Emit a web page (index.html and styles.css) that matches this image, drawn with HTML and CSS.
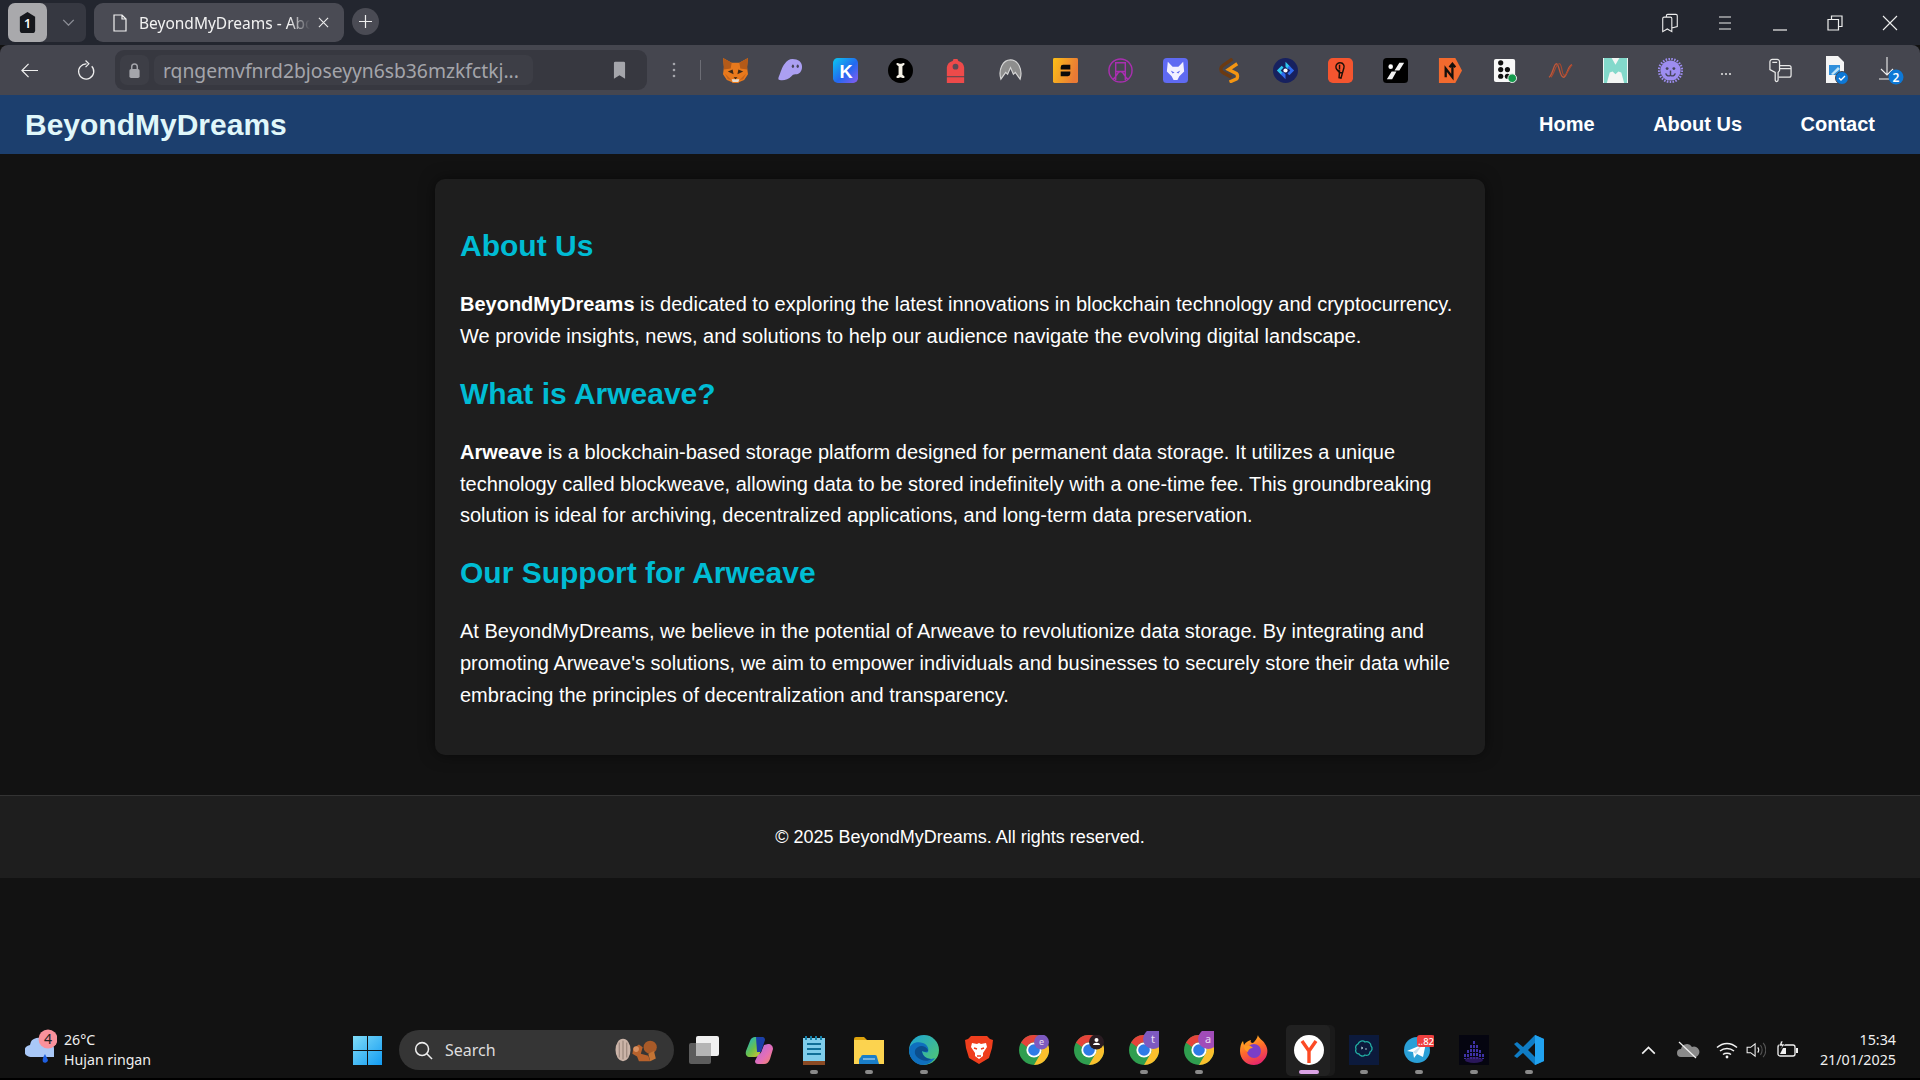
FILE: index.html
```html
<!DOCTYPE html>
<html lang="en">
<head>
<meta charset="utf-8">
<title>BeyondMyDreams - About Us</title>
<link rel="stylesheet" href="styles.css">
</head>
<body>
<svg class="defs" width="0" height="0" aria-hidden="true">
  <symbol id="chrome" viewBox="0 0 30 30">
    <circle cx="15" cy="15" r="15" fill="#2f9e4f"/>
    <path d="M2 7.5A15 15 0 0 1 28 7.5H15a7.5 7.5 0 0 0-7 4.5z" fill="#e5443a"/>
    <path d="M28 7.5A15 15 0 0 1 15 30l6.5-11.2a7.5 7.5 0 0 0 0-7.5z" fill="#fbc02d"/>
    <circle cx="15" cy="15" r="7.6" fill="#fff"/>
    <circle cx="15" cy="15" r="5.8" fill="#2f7be6"/>
  </symbol>
</svg>

<header class="tabstrip">
  <div class="tabcount">
    <div class="tabcount-square">
      <svg class="tabcount-glyph" viewBox="0 0 22 24"><path d="M3 6l8-5 8 5v14a3 3 0 0 1-3 3H6a3 3 0 0 1-3-3z" fill="#15171c"/><text x="11" y="18" text-anchor="middle" class="tabcount-num">1</text></svg>
    </div>
    <svg class="tabcount-chev" viewBox="0 0 14 8"><path d="M1 1l6 6 6-6" fill="none" stroke="#8b8d95" stroke-width="1.6"/></svg>
  </div>
  <div class="tab">
    <svg class="tab-doc" viewBox="0 0 14 18"><path d="M1 1h8l4 4v12H1zM9 1v4h4" fill="none" stroke="#f2f2f2" stroke-width="1.2"/></svg>
    <span class="tab-title">BeyondMyDreams - About Us</span>
    <svg class="tab-close" viewBox="0 0 12 12"><path d="M1 1l10 10M11 1L1 11" stroke="#eee" stroke-width="1.2"/></svg>
  </div>
  <div class="newtab"><svg viewBox="0 0 14 14"><path d="M7 0v14M0 7h14" stroke="#eee" stroke-width="1.3"/></svg></div>
  <div class="winctl">
    <svg viewBox="0 0 20 22"><path d="M2 6a1.500 1.500 0 0 1 1.500-1.500h7A1.500 1.500 0 0 1 12 6v14.500l-5-3-5 3zM6 4.500V3a1.500 1.500 0 0 1 1.500-1.500h9A1.500 1.500 0 0 1 18 3v12l-6 1.500" fill="none" stroke="#eee" stroke-width="1.200"/></svg>
    <svg viewBox="0 0 20 20"><path d="M4 4h12M4 10h12M4 16h12" stroke="#eee" stroke-width="1.200"/></svg>
    <svg viewBox="0 0 20 20"><path d="M3 17h14" stroke="#eee" stroke-width="1.200"/></svg>
    <svg viewBox="0 0 20 20"><path d="M3 6.500h10.500V17H3zM6.500 6.500V3H17v10.500h-3.500" fill="none" stroke="#eee" stroke-width="1.200"/></svg>
    <svg viewBox="0 0 20 20"><path d="M3 3l14 14M17 3L3 17" stroke="#eee" stroke-width="1.100"/></svg>
  </div>
</header>

<div class="toolbar">
  <div class="tool back"><svg viewBox="0 0 20 18"><path d="M19 9H2M9 2L2 9l7 7" fill="none" stroke="#eee" stroke-width="1.300"/></svg></div>
  <div class="tool reload"><svg viewBox="0 0 20 22"><path d="M15.500 6.500a8 8 0 1 1-5.500-2.500M9 0.500l3.500 3.500L9 7.500" fill="none" stroke="#eee" stroke-width="1.300"/></svg></div>
  <div class="address">
    <div class="lockbox"><svg viewBox="0 0 14 18"><path d="M4 8V5a3 3 0 0 1 6 0v3" fill="none" stroke="#a4a5ab" stroke-width="1.600"/><rect x="1.500" y="7.500" width="11" height="9.500" rx="1.800" fill="#a4a5ab"/></svg></div>
    <div class="urlbox"><span class="url">rqngemvfnrd2bjoseyyn6sb36mzkfctkj...</span></div>
    <svg class="addr-bookmark" viewBox="0 0 14 20"><path d="M1 2a1.500 1.500 0 0 1 1.500-1.500h9A1.500 1.500 0 0 1 13 2v17l-6-4-6 4z" fill="#a4a5ab"/></svg>
  </div>
  <div class="tool dots"><svg viewBox="0 0 4 16"><circle cx="2" cy="2" r="1.300" fill="#a4a5ab"/><circle cx="2" cy="8" r="1.300" fill="#a4a5ab"/><circle cx="2" cy="14" r="1.300" fill="#a4a5ab"/></svg></div>
  <div class="tool-sep"></div>
  <div class="exts">
    <div class="ext"><svg viewBox="0 0 26 26"><path d="M0 0l9 5h8l9-5-1 9 1 8-4 6-5 2-2 2h-4l-2-2-5-2-4-6 1-8z" fill="#e8791c"/><path d="M0 0l9 5-1 6-7 1zM26 0l-9 5 1 6 7 1z" fill="#b35a18"/><path d="M5 14l5-2 1 5zM21 14l-5-2-1 5z" fill="#3a2a1a"/><path d="M9 22h8l-1 3h-6z" fill="#e6dcd0"/><path d="M11 20h4l-2 2z" fill="#2a1e12"/><path d="M2 16l3 6 4 1zM24 16l-3 6-4 1z" fill="#c9651a"/></svg></div>
    <div class="ext"><svg viewBox="0 0 26 26"><path d="M15 1c6 0 10 3 10 8 0 5-3 8-7 8-2 0-3 1-4 2-3 3-8 5-12 4-2 0-2-2-1-4C3 15 4 9 7 6c2-3 5-5 8-5z" fill="#ab9ff2"/><ellipse cx="15.500" cy="8.500" rx="1.200" ry="1.800" fill="#47455a"/><ellipse cx="20.500" cy="8.500" rx="1.200" ry="1.800" fill="#47455a"/></svg></div>
    <div class="ext"><svg viewBox="0 0 26 26"><defs><linearGradient id="kg" x1="0" y1="0" x2="1" y2="1"><stop offset="0" stop-color="#0bc8ee"/><stop offset=".55" stop-color="#2268f0"/><stop offset="1" stop-color="#8a5cf0"/></linearGradient></defs><rect width="26" height="26" rx="5" fill="url(#kg)"/><text x="13.500" y="20.500" text-anchor="middle" class="kglyph">K</text></svg></div>
    <div class="ext"><svg viewBox="0 0 26 26"><circle cx="13" cy="13" r="13" fill="#000"/><path d="M9 5.500c1.500-1 2.500 .5 4 .5s2.500-1.500 4-.5c1 1-.5 2-2 3v9c1.500 1 3 2 2 3-1.500 1-2.500-.5-4-.5s-2.500 1.500-4 .5c-1-1 .5-2 2-3v-9c-1.500-1-3-2-2-3z" fill="#f4f0e6"/></svg></div>
    <div class="ext"><svg viewBox="0 0 26 26"><path d="M10 3l1-2h4l1 2a8 8 0 0 1 6 7v9H4v-9a8 8 0 0 1 6-7z" fill="#ed4a4a"/><circle cx="13" cy="9" r="3" fill="#5a4a55"/><rect x="4" y="20" width="18" height="6" fill="#ed4a4a"/></svg></div>
    <div class="ext"><svg viewBox="0 0 26 26"><path d="M3 22C0 12 5 2 13 2s13 10 10 20l-5-7-2 2-3-7-3 7-2-2z" fill="#8e8e8e" stroke="#d6d6d6" stroke-width="1.200"/></svg></div>
    <div class="ext"><svg viewBox="0 0 26 26"><defs><linearGradient id="sg" x1="0" y1="0" x2="1" y2=".3"><stop offset="0" stop-color="#fbbf17"/><stop offset="1" stop-color="#ea7a35"/></linearGradient></defs><rect width="26" height="26" rx="1.500" fill="url(#sg)"/><path d="M8 9.500a2.500 2.500 0 0 1 2.500-2.500H18v5H8zM8 14h10v2.500a2.500 2.500 0 0 1-2.500 2.500H8z" fill="#0a0a0a"/></svg></div>
    <div class="ext"><svg viewBox="0 0 26 26"><g fill="none" stroke="#a92fb0" stroke-width="1.500"><circle cx="13" cy="13" r="12"/><path d="M8 23V5h10v18M5 22c4-1 4-8 8-8s4 7 8 8M8 14h10"/></g></svg></div>
    <div class="ext"><svg viewBox="0 0 26 26"><rect width="26" height="26" rx="4" fill="#5f6af2"/><path d="M5 4l5 5h6l5-5 1 10-5 5-2 4h-4l-2-4-5-5z" fill="#f2f0ff"/><path d="M8 13l4 2-2 1zM18 13l-4 2 2 1z" fill="#5f6af2"/></svg></div>
    <div class="ext"><svg viewBox="0 0 26 26"><path d="M15 1L5 8a4 4 0 0 0 0 7l9 5" fill="none" stroke="#6b3a12" stroke-width="3.500"/><path d="M20 6l-9 6 8 4a4 4 0 0 1 0 6l-7 3" fill="none" stroke="#f39512" stroke-width="3.500"/></svg></div>
    <div class="ext"><svg viewBox="0 0 26 26"><circle cx="13" cy="13" r="13" fill="#17215f"/><path d="M13 4l5 5-2.500 2.500L13 9zM4 13l5-5 2 2-3 3 3 3-2 2z" fill="#2ec8f0"/><path d="M22 13l-5-5-2 2 3 3-3 3 2 2zM13 22l-5-5 2.500-2.500L13 17z" fill="#2f6bf0"/><circle cx="13" cy="13" r="2.200" fill="#fff"/></svg></div>
    <div class="ext"><svg viewBox="0 0 26 26"><rect width="26" height="26" rx="5" fill="#f4552f"/><path d="M13 5a4 4 0 0 1 3.500 5.500L13.500 21l-2-.5.500-7a4 4 0 0 1 1-8.500zM10 13c1 2 3 3 6 2M12 7v5" fill="none" stroke="#1c1008" stroke-width="1.500"/></svg></div>
    <div class="ext"><svg viewBox="0 0 26 26"><rect width="26" height="26" rx="4" fill="#000"/><circle cx="8" cy="9" r="2.400" fill="#fff"/><path d="M17 5h5l-5 8h-5zM9 14h5l-4.500 8H4z" fill="#f2f2f2"/></svg></div>
    <div class="ext"><svg viewBox="0 0 26 26"><path d="M1 0h17l7 13-7 13H1z" fill="#f26a2e"/><path d="M8 20V11l7 9V7M12 9.500l3-3.500 3 3.500" fill="none" stroke="#14100c" stroke-width="2.400"/></svg></div>
    <div class="ext"><svg viewBox="0 0 26 26"><rect x="1" y="1" width="22" height="24" rx="2" fill="#f8f8f8"/><g fill="#111"><circle cx="8" cy="5" r="2.700"/><circle cx="8" cy="12" r="2.700"/><circle cx="15" cy="12" r="2.700"/><circle cx="8" cy="19" r="2.700"/><circle cx="15" cy="19" r="2.700"/></g><circle cx="20" cy="21" r="4.500" fill="#149a4c" stroke="#f2f2f2" stroke-width="1"/></svg></div>
    <div class="ext"><svg viewBox="0 0 26 26"><path d="M1 20C5 18 6 5 9 6c3 1 3 14 7 14s4-12 9-13" fill="none" stroke="#c0583a" stroke-width="1.400"/><path d="M3 20C7 16 8 5 12 6c3 1 2 12 5 12s5-8 8-11" fill="none" stroke="#a8492f" stroke-width="1.200"/></svg></div>
    <div class="ext"><svg viewBox="0 0 26 26"><rect width="26" height="26" fill="#f3f6f4"/><path d="M1 0h8l4 7 4-7h8v26h-3l-3-11-3-1-3 3-3-3-3 1-3 11H1z" fill="#83d9cb"/></svg></div>
    <div class="ext"><svg viewBox="0 0 26 26"><circle cx="13" cy="13" r="10.500" fill="#9d8df0"/><circle cx="13" cy="13" r="12" fill="none" stroke="#9d8df0" stroke-width="2.400" stroke-dasharray="1.600 1.400"/><circle cx="9.500" cy="11" r="1.500" fill="#46455a"/><circle cx="16.500" cy="11" r="1.500" fill="#46455a"/><path d="M13 13v5M8 16c1 3 3 3 5 2 2 1 4 1 5-2" fill="none" stroke="#46455a" stroke-width="1.500"/></svg></div>
    <div class="ext ext-more"><svg viewBox="0 0 12 4"><circle cx="2" cy="2" r="1.100" fill="#ddd"/><circle cx="6" cy="2" r="1.100" fill="#ddd"/><circle cx="10" cy="2" r="1.100" fill="#ddd"/></svg></div>
    <div class="ext"><svg viewBox="0 0 26 26"><g fill="none" stroke="#e8e8e8" stroke-width="1.300"><path d="M2 4a2.500 2.500 0 0 1 2.500-2.500h5A2.500 2.500 0 0 1 12 4v9l-1.500 2v8a1.500 1.500 0 0 1-3 0v-8L2 12z"/><path d="M4.500 4.500h5M12 8h10a2 2 0 0 1 2 2v8a2 2 0 0 1-2 2H11M12 11h12"/></g></svg></div>
    <div class="ext"><svg viewBox="0 0 26 30" class="ext-tall"><path d="M3 1h12l6 6v21H3z" fill="#f5f5f5"/><path d="M6 10h11v10H6z" fill="#2f8fdc"/><path d="M8 19l7-7 2 2-7 6z" fill="#bfe3f7"/><circle cx="19" cy="23" r="6.500" fill="#0d78d6" stroke="#45464f" stroke-width="1"/><path d="M16 23l2 2 4-4" fill="none" stroke="#fff" stroke-width="1.300"/></svg></div>
    <div class="ext"><svg viewBox="0 0 26 28" class="ext-tall"><path d="M9 1v17M3 13l6 6 6-6M1 23h10" fill="none" stroke="#eee" stroke-width="1.100"/><circle cx="18" cy="21" r="7.500" fill="#0d78d6"/><text x="18" y="25.500" text-anchor="middle" class="dl-num">2</text></svg></div>
  </div>
</div>

<div class="site">
  <nav class="sitenav">
    <a class="brand">BeyondMyDreams</a>
    <div class="navlinks">
      <a>Home</a>
      <a>About Us</a>
      <a>Contact</a>
    </div>
  </nav>
  <main class="content">
    <article class="card">
      <h2>About Us</h2>
      <p><strong>BeyondMyDreams</strong> is dedicated to exploring the latest innovations in blockchain technology and cryptocurrency. We provide insights, news, and solutions to help our audience navigate the evolving digital landscape.</p>
      <h2>What is Arweave?</h2>
      <p><strong>Arweave</strong> is a blockchain-based storage platform designed for permanent data storage. It utilizes a unique technology called blockweave, allowing data to be stored indefinitely with a one-time fee. This groundbreaking solution is ideal for archiving, decentralized applications, and long-term data preservation.</p>
      <h2>Our Support for Arweave</h2>
      <p>At BeyondMyDreams, we believe in the potential of Arweave to revolutionize data storage. By integrating and promoting Arweave's solutions, we aim to empower individuals and businesses to securely store their data while embracing the principles of decentralization and transparency.</p>
    </article>
  </main>
  <footer class="sitefoot">© 2025 BeyondMyDreams. All rights reserved.</footer>
</div>

<div class="taskbar">
  <div class="weather">
    <svg class="weather-icon" viewBox="0 0 32 36"><path d="M6 28a6 6 0 0 1-1-12 8 8 0 0 1 15-3 7 7 0 0 1 9 7v8z" fill="#a9c8f7"/><path d="M20 25l3 6a3 3 0 0 1-5 2c-1-2 0-5 2-8z" fill="#1f5fe0"/><circle cx="23" cy="10" r="9.500" fill="#f9919c"/><text x="23" y="15" text-anchor="middle" class="weather-num">4</text></svg>
    <div class="weather-text"><span>26°C</span><span>Hujan ringan</span></div>
  </div>
  <svg class="winlogo" viewBox="0 0 29 29"><defs><linearGradient id="wg" x1="0" y1="0" x2="1" y2="1"><stop offset="0" stop-color="#7fdcf8"/><stop offset="1" stop-color="#129bf2"/></linearGradient></defs><path d="M0 0h14v14H0zM15 0h14v14H15zM0 15h14v14H0zM15 15h14v14H15z" fill="url(#wg)"/></svg>
  <div class="search">
    <svg class="search-glass" viewBox="0 0 20 20"><circle cx="8.500" cy="8.500" r="6.800" fill="none" stroke="#eee" stroke-width="1.600"/><path d="M13.500 13.500L19 19" stroke="#eee" stroke-width="1.600"/></svg>
    <span class="search-text">Search</span>
    <svg class="search-art" viewBox="0 0 50 32"><ellipse cx="9" cy="16" rx="8" ry="12" fill="#cbb4a8"/><path d="M5 8v16M9 6v20M13 8v16" stroke="#8d7a70" stroke-width="1"/><path d="M20 14l6-4 4 3-2 7 8 2 2 6H26l-2-5-5-3z" fill="#b8622c"/><circle cx="23" cy="15" r="3" fill="#d99060"/><circle cx="38" cy="13" r="7" fill="#a85a28"/><path d="M36 20l6-3 2 8-6 3z" fill="#c47434"/></svg>
  </div>
  <div class="tasks">
    <div class="task"><svg viewBox="0 0 30 30"><rect x="0" y="8" width="22" height="21" rx="2" fill="#5c5c5c"/><rect x="7" y="1" width="23" height="20" rx="2" fill="#efefef"/><rect x="7" y="8" width="15" height="13" fill="#b5b5b5"/></svg></div>
    <div class="task"><svg viewBox="0 0 30 30"><defs><linearGradient id="cp1" x1="0" y1="0" x2="1" y2="1"><stop offset="0" stop-color="#0fb3e0"/><stop offset=".5" stop-color="#6bc04a"/><stop offset="1" stop-color="#f5c52c"/></linearGradient><linearGradient id="cp2" x1="0" y1="0" x2="1" y2="1"><stop offset="0" stop-color="#a86ae8"/><stop offset=".6" stop-color="#e66fb4"/><stop offset="1" stop-color="#f08a5a"/></linearGradient></defs><path d="M11 2h6c2 0 3 1 3 3l-4 13c-1 3-3 4-5 4H6c-3 0-5-2-4-6L6 6c1-3 3-4 5-4z" fill="url(#cp1)"/><path d="M24 9c3 0 5 2 5 5l-3 10c-1 3-3 5-6 5h-6c-2 0-3-1-3-3l3-6c2-1 3-2 4-5l2-5z" fill="url(#cp2)"/><path d="M12 2h6c2 0 3 1 3 3l-4 12h-4z" fill="#1a3ea8"/></svg></div>
    <div class="task task-on"><svg viewBox="0 0 30 30"><rect x="0" y="3" width="22" height="27" fill="#7fcdeb" transform="translate(4 0)"/><rect x="4" y="26" width="22" height="4" fill="#8a4a24"/><path d="M8 9h14M8 14h14M8 19h14" stroke="#0f6f98" stroke-width="2"/><path d="M7 1v4M12 1v4M17 1v4M22 1v4" stroke="#1480a8" stroke-width="2"/></svg></div>
    <div class="task task-on"><svg viewBox="0 0 30 30"><path d="M0 4a2 2 0 0 1 2-2h8l3 3h-13z" fill="#dca20c"/><path d="M0 5h30v24H0z" fill="#fcd34f"/><path d="M5 25a4 4 0 0 1 2-3 2 2 0 0 1 2-2h12a2 2 0 0 1 2 2l2 7H5z" fill="#1a7ec8"/><path d="M9 24h12" stroke="#cfe6f7" stroke-width="1"/></svg></div>
    <div class="task task-on"><svg viewBox="0 0 30 30"><defs><linearGradient id="eg" x1="0" y1="0" x2="1" y2="1"><stop offset="0" stop-color="#1aa3d8"/><stop offset="1" stop-color="#55c86a"/></linearGradient></defs><circle cx="15" cy="15" r="15" fill="url(#eg)"/><path d="M0 15C1 8 8 6 14 8c5 2 6 6 5 9-1 1-4 0-6-1 0 4 4 8 9 8 2 0 3-1 4-1-3 4-7 7-12 7C6 30 0 23 0 15z" fill="#0f6fbe"/><path d="M9 12c3-2 8-1 10 3 0 2-3 2-6 1 0 5 5 8 9 8-3 3-10 2-14-2-3-3-3-8 1-10z" fill="#0b4f8e"/></svg></div>
    <div class="task"><svg viewBox="0 0 30 30"><path d="M7 1h16l3 3 3 1-1 8-3 10-10 6-10-6-3-10-1-8 3-1z" fill="#ef3e1d"/><path d="M8 8l5 1 2-1 2 1 5-1 1 4-4 6v3l-4 3-4-3v-3l-4-6z" fill="#fff"/><path d="M10 13l3 1M20 13l-3 1M13 21h4" stroke="#ef3e1d" stroke-width="1.500"/></svg></div>
    <div class="task"><svg class="badged" viewBox="0 0 30 30"><use href="#chrome"/><circle cx="22.500" cy="7" r="7.500" fill="#7d5ac0"/><text x="22.500" y="10" text-anchor="middle" class="chrome-letter">e</text></svg></div>
    <div class="task"><svg class="badged" viewBox="0 0 30 30"><use href="#chrome"/><circle cx="22.500" cy="7" r="7.500" fill="#2a1c22"/><circle cx="22.500" cy="5" r="2" fill="#fff"/><path d="M19 10c0-3 7-3 7 0z" fill="#fff"/></svg></div>
    <div class="task task-on"><svg class="badged-tall" viewBox="0 -4 30 34"><use href="#chrome" width="30" height="30" y="0"/><circle cx="24" cy="4" r="10" fill="#7d5ac0"/><text x="24" y="8" text-anchor="middle" class="chrome-letter big">t</text></svg></div>
    <div class="task task-on"><svg class="badged-tall" viewBox="0 -4 30 34"><use href="#chrome" width="30" height="30" y="0"/><circle cx="24" cy="4" r="10" fill="#a14cb8"/><text x="24" y="8" text-anchor="middle" class="chrome-letter big">a</text></svg></div>
    <div class="task"><svg viewBox="0 0 30 30"><defs><linearGradient id="ff" x1=".2" y1="0" x2=".6" y2="1"><stop offset="0" stop-color="#ffc31f"/><stop offset=".5" stop-color="#ff6a2b"/><stop offset="1" stop-color="#e6246e"/></linearGradient></defs><path d="M19 0c0 3 5 5 7 9 3 4 3 9 1 13-3 5-7 8-12 8C7 30 1 24 1 16c0-4 1-8 3-10l1 4c2-3 4-4 7-5-1 2 0 3 2 3 2-2 4-4 5-8z" fill="url(#ff)"/><circle cx="15" cy="16" r="7" fill="#7a3ec8"/><path d="M5 11c3-1 7-1 9 2-3 0-5 2-5 4-3-1-4-3-4-6z" fill="#ff9a22"/></svg></div>
    <div class="task task-active"><svg viewBox="0 0 30 30"><circle cx="15" cy="15" r="15" fill="#fff"/><path d="M15 28V16L8 6M15 16l7-10" fill="none" stroke="#fc4a24" stroke-width="3.400"/></svg></div>
    <div class="task task-on"><svg viewBox="0 0 30 30"><rect width="30" height="30" fill="#0c1a3c"/><path d="M9 9c1-3 5-4 7-2 3-1 6 1 6 4 2 2 1 5-1 6 0 3-3 4-5 3-2 2-5 1-6-1-3 0-4-3-3-5-1-2 0-4 2-5z" fill="none" stroke="#22b0a4" stroke-width="1.300"/><path d="M12 12l2 1-2 1M16 14h2" fill="none" stroke="#c8e8e8" stroke-width=".8"/></svg></div>
    <div class="task task-on"><svg viewBox="0 0 30 30"><circle cx="13" cy="15" r="13" fill="#2a9fd6"/><path d="M3 16l19-8-3 14-6-3-3 4-1-6z" fill="#fff"/><path d="M9 17l9-7-6 9z" fill="#c8e0ee"/><rect x="13" y="0" width="18" height="12" rx="3" fill="#ee3f3f"/><text x="22" y="9.500" text-anchor="middle" class="tg-num">..82</text></svg></div>
    <div class="task task-on"><svg viewBox="0 0 30 30"><rect width="30" height="30" fill="#050510"/><path d="M15 6v18M12 10v14M18 10v14M9 15v9M21 15v9M6 19v5M24 19v5" stroke="#5142d8" stroke-width="1.500" stroke-dasharray="3 1"/><ellipse cx="15" cy="25" rx="9" ry="3" fill="#3a1f7a" opacity=".7"/></svg></div>
    <div class="task task-on"><svg viewBox="0 0 30 30"><path d="M21 0l9 4v22l-9 4L9 18l-6 5-3-2 6-6-6-6 3-2 6 5z" fill="#0f7cc4"/><path d="M21 0l9 4v22l-9 4z" fill="#21a2ef"/><path d="M21 8l-7 7 7 7z" fill="#121212"/></svg></div>
  </div>
  <div class="tray">
    <svg class="tray-chev" viewBox="0 0 16 10"><path d="M1 8.500l7-7 7 7" fill="none" stroke="#f2f2f2" stroke-width="1.800"/></svg>
    <svg class="tray-cloud" viewBox="0 0 24 20"><path d="M5 17a4 4 0 0 1 0-8 6 6 0 0 1 11-2 5 5 0 0 1 4 10z" fill="#8a8a8a"/><path d="M3 2l17 16" stroke="#f2f2f2" stroke-width="1.200"/></svg>
    <svg class="tray-wifi" viewBox="0 0 22 18"><path d="M1 6.500c6-5.500 14-5.500 20 0M4 10c4-3.500 10-3.500 14 0M7 13.500c2-1.700 6-1.700 8 0" fill="none" stroke="#f2f2f2" stroke-width="1.500"/><circle cx="11" cy="16" r="1.400" fill="#f2f2f2"/></svg>
    <svg class="tray-vol" viewBox="0 0 22 18"><path d="M1 6h4l5-4v14l-5-4H1z" fill="none" stroke="#f2f2f2" stroke-width="1.200"/><path d="M13 6c1.500 2 1.500 4 0 6" fill="none" stroke="#f2f2f2" stroke-width="1.200"/><path d="M16 3.500c2.500 3 2.500 8 0 11M19 1c4 4.500 4 11.500 0 16" fill="none" stroke="#555" stroke-width="1.200"/></svg>
    <svg class="tray-bat" viewBox="0 0 22 18"><rect x="1" y="4" width="17" height="11" rx="2" fill="none" stroke="#f2f2f2" stroke-width="1.300"/><path d="M19 7h2v5h-2z" fill="#f2f2f2"/><path d="M3 13l3-6h3v6z" fill="#f2f2f2"/><path d="M4 0L2 5h3L3 9l5-6H5l1-3z" fill="#f2f2f2" stroke="#121212" stroke-width=".6"/></svg>
    <div class="clock"><span>15:34</span><span>21/01/2025</span></div>
  </div>
</div>
</body>
</html>
```

FILE: styles.css
```css
* { box-sizing: border-box; }
html, body { margin: 0; height: 100%; }
body {
  display: flex;
  flex-direction: column;
  height: 1080px;
  overflow: hidden;
  background: #121212;
  color: #fff;
  font-family: "Liberation Sans", Arial, sans-serif;
}
.defs { position: absolute; }

/* tab strip */
.tabstrip {
  flex: 0 0 45px;
  display: flex;
  align-items: flex-start;
  padding: 3px 0 0 8px;
  background: #23262f;
  font-family: "Noto Sans", sans-serif;
}
.tabcount {
  width: 78px;
  height: 39px;
  display: flex;
  align-items: center;
  background: #363841;
  border-radius: 7px;
}
.tabcount-square {
  width: 39px;
  height: 39px;
  display: flex;
  align-items: center;
  justify-content: center;
  background: #a9a9ac;
  border-radius: 7px;
}
.tabcount-glyph { width: 21px; height: 23px; }
.tabcount-num { font: 600 13px "Noto Sans", sans-serif; fill: #fff; }
.tabcount-chev { width: 13px; height: 7px; margin-left: 15px; }
.tab {
  width: 250px;
  height: 39px;
  margin-left: 8px;
  padding-left: 19px;
  display: flex;
  align-items: center;
  background: #4a4b54;
  border-radius: 9px;
}
.tab-doc { width: 14px; height: 18px; }
.tab-title {
  width: 171px;
  margin-left: 12px;
  overflow: hidden;
  white-space: nowrap;
  font-size: 15.5px;
  color: #f2f2f2;
  -webkit-mask-image: linear-gradient(90deg, #000 88%, transparent 100%);
  mask-image: linear-gradient(90deg, #000 88%, transparent 100%);
}
.tab-close { width: 11px; height: 11px; margin-left: 8px; }
.newtab {
  width: 27px;
  height: 27px;
  margin: 5px 0 0 8px;
  display: flex;
  align-items: center;
  justify-content: center;
  background: #4a4b54;
  border-radius: 50%;
}
.newtab svg { width: 13px; height: 13px; }
.winctl {
  margin-left: auto;
  display: flex;
  height: 40px;
  align-items: center;
}
.winctl svg { width: 20px; height: 20px; margin-left: 35px; }
.winctl svg:last-child { margin-right: 20px; }

/* toolbar */
.toolbar {
  flex: 0 0 50px;
  display: flex;
  align-items: center;
  background: #45464f;
  border-radius: 8px 8px 0 0;
}
.tool { display: flex; align-items: center; justify-content: center; height: 40px; }
.back { width: 58px; }
.back svg { width: 19px; height: 17px; }
.reload { width: 57px; }
.reload svg { width: 19px; height: 21px; }
.address {
  width: 532px;
  height: 40px;
  display: flex;
  align-items: center;
  padding: 0 5px;
  background: #373840;
  border-radius: 9px;
  font-family: "Noto Sans", sans-serif;
}
.lockbox {
  width: 29px;
  height: 30px;
  display: flex;
  align-items: center;
  justify-content: center;
  background: #3d3e46;
  border-radius: 7px;
}
.lockbox svg { width: 13px; height: 17px; }
.urlbox {
  width: 379px;
  height: 30px;
  margin-left: 5px;
  padding-left: 9px;
  display: flex;
  align-items: center;
  background: #3d3e46;
  border-radius: 7px;
}
.url { font-size: 19.3px; color: #a4a5ab; white-space: nowrap; }
.addr-bookmark { width: 13px; height: 19px; margin-left: 80px; }
.dots { width: 53px; }
.dots svg { width: 4px; height: 16px; }
.tool-sep { width: 1px; height: 20px; background: #6c6d75; }
.exts { display: flex; margin-left: 7px; }
.ext {
  width: 55px;
  height: 30px;
  display: flex;
  align-items: center;
  justify-content: center;
}
.ext svg { width: 25px; height: 25px; }
.ext svg.ext-tall { height: 30px; width: 26px; }
.ext-more { padding-top: 7px; }
.ext-more svg { width: 12px; height: 4px; }
.kglyph { font: 700 19px "Liberation Sans", sans-serif; fill: #fff; }
.dl-num { font: 600 12px "Noto Sans", sans-serif; fill: #fff; }

/* site */
.sitenav {
  height: 59px;
  display: flex;
  align-items: center;
  justify-content: space-between;
  padding: 0 45px 0 25px;
  background: #1c3f6e;
}
.brand { font-size: 30px; font-weight: 700; color: #e0f7fa; }
.navlinks { display: flex; gap: 58.5px; font-size: 20px; font-weight: 700; }
.content { padding: 25px 0 40px; display: flex; justify-content: center; }
.card {
  width: 1050px;
  padding: 26px 25px 19px;
  background: #1e1e1e;
  border-radius: 10px;
  box-shadow: 0 0 15px rgba(0, 0, 0, .5);
}
.card h2 {
  margin: 24px 0;
  font-size: 30px;
  font-weight: 700;
  color: #00bcd4;
}
.card p {
  margin: 26px 0 24px;
  font-size: 20px;
  line-height: 31.85px;
}
.sitefoot {
  height: 83px;
  padding-top: 2px;
  display: flex;
  align-items: center;
  justify-content: center;
  background: #1e1e1e;
  border-top: 1px solid #333;
  font-size: 18px;
}

/* taskbar */
.taskbar {
  margin-top: auto;
  height: 60px;
  padding: 2px 0 0 25px;
  display: flex;
  align-items: center;
  background: #121212;
  border-bottom: 2px solid #000;
  font-family: "Noto Sans", sans-serif;
}
.weather { width: 328px; display: flex; align-items: center; }
.weather-icon { width: 32px; height: 36px; margin-top: -6px; }
.weather-num { font: 400 14px "Noto Sans", sans-serif; fill: #222; }
.weather-text {
  margin-left: 7px;
  display: flex;
  flex-direction: column;
  font-size: 14.2px;
  line-height: 20px;
  color: #eee;
}
.winlogo { width: 29px; height: 29px; }
.search {
  width: 275px;
  height: 40px;
  margin-left: 17px;
  padding: 0 12px 0 15px;
  display: flex;
  align-items: center;
  background: #353535;
  border-radius: 20px;
}
.search-glass { width: 19px; height: 19px; }
.search-text { margin-left: 12px; font-size: 16px; color: #ddd; }
.search-art { width: 48px; height: 30px; margin-left: auto; }
.tasks { display: flex; margin-left: 2px; }
.task {
  position: relative;
  width: 55px;
  height: 56px;
  display: flex;
  align-items: center;
  justify-content: center;
}
.task > svg { width: 30px; height: 30px; }
.task > svg.badged-tall { height: 34px; margin-top: -4px; }
.task-on::after {
  content: "";
  position: absolute;
  bottom: 4px;
  left: 50%;
  width: 8px;
  height: 4px;
  margin-left: -4px;
  background: #8a8a8a;
  border-radius: 2px;
}
.task-active { z-index: 0; }
.task-active::before {
  content: "";
  position: absolute;
  top: 3px;
  bottom: 2px;
  left: 5px;
  width: 44px;
  background: #212121;
  border-radius: 5px;
  box-shadow: 5px 0 0 #1a1a1a;
}
.task-active > svg { position: relative; z-index: 1; }
.task-active::after {
  content: "";
  position: absolute;
  z-index: 1;
  bottom: 4px;
  left: 50%;
  width: 20px;
  height: 4px;
  margin-left: -10px;
  background: #dba3e6;
  border-radius: 2px;
}
.chrome-letter { font: 400 9px "Noto Sans", sans-serif; fill: #e8dcf2; }
.chrome-letter.big { font-size: 11px; }
.tg-num { font: 500 9.500px "Noto Sans", sans-serif; fill: #fff; }
.tray { margin-left: auto; padding-right: 24px; display: flex; align-items: center; }
.tray-chev { width: 15px; height: 9px; }
.tray-cloud { width: 24px; height: 20px; margin-left: 20px; }
.tray-wifi { width: 22px; height: 18px; margin-left: 16px; }
.tray-vol { width: 20px; height: 16px; margin-left: 8px; }
.tray-bat { width: 22px; height: 18px; margin-left: 11px; }
.clock {
  margin-left: 8px;
  width: 89px;
  display: flex;
  flex-direction: column;
  align-items: flex-end;
  font-size: 14.3px;
  line-height: 20px;
  color: #f0f0f0;
}
```
